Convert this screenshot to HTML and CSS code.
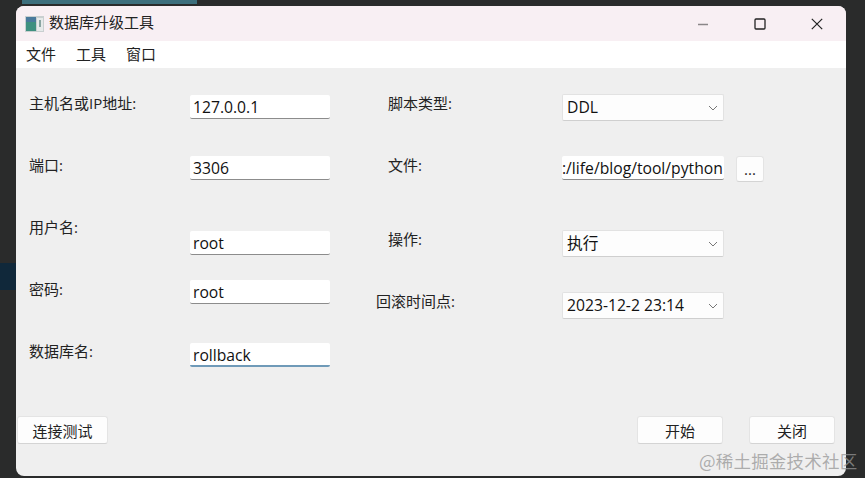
FILE: index.html
```html
<!DOCTYPE html>
<html lang="zh-CN">

<head>
    <meta charset="utf-8">
    <meta name="viewport" content="width=device-width, initial-scale=1.0">
    <title>数据库升级工具</title>
    <link rel="stylesheet" href="styles.css">
</head>

<body>

    <div class="strip-top"></div>
    <div class="strip-left"></div>

    <div class="window">
        <header class="titlebar">
            <svg class="appicon" width="19" height="16" viewBox="0 0 19 16">
                <rect width="19" height="16" fill="#c9cfd0" />
                <rect x="1" y="1" width="10" height="14" fill="#3f9080" />
                <rect x="1" y="1" width="10" height="5" fill="#4a7a9c" />
                <rect x="12" y="2" width="6" height="13" fill="#e6eaea" />
                <rect x="14" y="4" width="2" height="7" fill="#8aa5a2" />
            </svg>
            <span class="apptitle">数据库升级工具</span>
            <div class="winbtns">
                <svg width="12" height="12" viewBox="0 0 12 12"><path d="M1 6.5h10" stroke="#8a8688" stroke-width="1.3" /></svg>
                <svg width="12" height="12" viewBox="0 0 12 12"><rect x="1" y="1" width="10" height="10" rx="1" fill="none" stroke="#222" stroke-width="1.3" /></svg>
                <svg width="12" height="12" viewBox="0 0 12 12"><path d="M.8.8l10.4 10.4M11.2.8L.8 11.2" stroke="#222" stroke-width="1.2" /></svg>
            </div>
        </header>

        <nav class="menu">
            <span>文件</span>
            <span>工具</span>
            <span>窗口</span>
        </nav>

        <main class="form">
            <section class="col-left">
                <div class="row">
                    <label>主机名或IP地址:</label>
                    <div class="input nudge">127.0.0.1</div>
                </div>
                <div class="row">
                    <label>端口:</label>
                    <div class="input">3306</div>
                </div>
                <div class="row">
                    <label>用户名:</label>
                    <div class="input low">root</div>
                </div>
                <div class="row">
                    <label>密码:</label>
                    <div class="input">root</div>
                </div>
                <div class="row">
                    <label>数据库名:</label>
                    <div class="input nudge focus">rollback</div>
                </div>
            </section>

            <section class="col-right">
                <div class="row">
                    <label>脚本类型:</label>
                    <div class="combo">DDL<svg class="chev" width="10" height="6" viewBox="0 0 10 6"><path d="M1 1l4 4 4-4" fill="none" stroke="#777" /></svg></div>
                </div>
                <div class="row">
                    <label>文件:</label>
                    <div class="input path">:/life/blog/tool/python</div>
                    <button class="more">...</button>
                </div>
                <div class="row row-op">
                    <label>操作:</label>
                    <div class="combo">执行<svg class="chev" width="10" height="6" viewBox="0 0 10 6"><path d="M1 1l4 4 4-4" fill="none" stroke="#777" /></svg></div>
                </div>
                <div class="row row-time">
                    <label>回滚时间点:</label>
                    <div class="combo">2023-12-2 23:14<svg class="chev" width="10" height="6" viewBox="0 0 10 6"><path d="M1 1l4 4 4-4" fill="none" stroke="#777" /></svg></div>
                </div>
            </section>
        </main>

        <footer class="actions">
            <button class="test">连接测试</button>
            <button class="start">开始</button>
            <button class="quit">关闭</button>
        </footer>
    </div>

    <div class="watermark">@稀土掘金技术社区</div>

</body>

</html>
```

FILE: styles.css
```css
body {
    margin: 0;
    height: 478px;
    overflow: hidden;
    background-color: #2a2b2b;
    font-family: "Open Sans", "Noto Sans CJK SC", sans-serif;
    font-size: 15px;
    color: #222;
}

/*Desktop behind the window*/

.strip-top {
    position: absolute;
    left: 22px;
    top: 0;
    width: 175px;
    height: 4px;
    background-color: #3d6f7c;
}

.strip-left {
    position: absolute;
    left: 0;
    top: 263px;
    width: 16px;
    height: 27px;
    background-color: #10283a;
}

.window {
    position: absolute;
    left: 16px;
    top: 6px;
    width: 830px;
    height: 470px;
    border-radius: 8px;
    overflow: hidden;
    background-color: #efefef;
}

/*Title and menu*/

.titlebar {
    display: flex;
    align-items: center;
    height: 35px;
    padding-left: 9px;
    background-color: #f8eff3;
}

.appicon {
    margin-right: 5px;
}

.apptitle {
    font-size: 15px;
    padding-bottom: 4px;
}

.winbtns {
    display: flex;
    gap: 45px;
    margin-left: auto;
    margin-right: 23px;
}

.menu {
    display: flex;
    gap: 20px;
    height: 27px;
    padding-left: 10px;
    line-height: 27px;
    background-color: white;
}

/*Form*/

.form {
    display: flex;
    height: 327px;
    padding-top: 21px;
}

.col-left {
    width: 359px;
    padding-left: 13px;
}

.row {
    display: flex;
    height: 62px;
}

label {
    height: 28px;
    line-height: 28px;
    font-size: 15px;
}

.col-left label {
    width: 161px;
}

.col-right label {
    width: 174px;
}

.input {
    box-sizing: border-box;
    width: 140px;
    height: 24px;
    margin-top: 5px;
    padding-left: 3px;
    line-height: 25px;
    font-size: 15.7px;
    color: #111;
    background-color: white;
    border-bottom: 1px solid #8c8c8c;
    border-radius: 2px;
}

.nudge {
    margin-top: 6px;
}

.low {
    margin-top: 18px;
}

.focus {
    border-bottom: 2px solid #6f9ab8;
}

.input.path {
    width: 162px;
    padding-left: 0;
    overflow: hidden;
    white-space: nowrap;
    line-height: 25px;
}

.combo {
    position: relative;
    box-sizing: border-box;
    width: 162px;
    height: 27px;
    margin-top: 5px;
    padding-left: 4px;
    line-height: 25px;
    font-size: 15.7px;
    color: #111;
    background-color: #fdfdfd;
    border: 1px solid #e2e2e2;
    border-bottom-color: #cfcfcf;
    border-radius: 2px;
}

.chev {
    position: absolute;
    right: 5px;
    top: 10px;
}

.row-op {
    padding-top: 12px;
    margin-bottom: -12px;
}

.row-time {
    margin-left: -12px;
    padding-top: 12px;
}

.row-time label {
    width: 186px;
}

button {
    font-family: "Open Sans", "Noto Sans CJK SC", sans-serif;
    font-size: 15px;
    color: #222;
    background-color: #fdfdfd;
    border: 1px solid #e4e4e4;
    border-bottom-color: #d4d4d4;
    border-radius: 3px;
    padding: 0;
}

.more {
    width: 28px;
    height: 26px;
    margin-top: 5px;
    margin-left: 12px;
    line-height: 18px;
}

/*Bottom buttons*/

.actions {
    display: flex;
    height: 28px;
    padding-left: 1px;
}

.test {
    width: 91px;
}

.start {
    width: 86px;
    margin-left: auto;
}

.quit {
    width: 86px;
    margin-left: 26px;
    margin-right: 11px;
}

.watermark {
    position: absolute;
    left: 699px;
    top: 448px;
    font-family: "Noto Sans CJK SC", sans-serif;
    font-size: 17.5px;
    letter-spacing: 0.2px;
    color: rgba(150, 150, 150, 0.75);
}
```
